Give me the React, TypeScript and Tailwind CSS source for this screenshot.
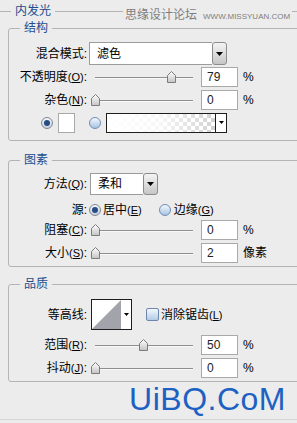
import { ReactNode } from "react"

const Label = ({ children }: { children: ReactNode }) => (
    <span className="w-[78px] shrink-0 text-right text-[12px] leading-[14px] text-black">{children}</span>
)

const Key = ({ k }: { k: string }) => (
    <span className="text-[11px]">(<u>{k}</u>)</span>
)

const Group = ({ title, className, children }: { title: string, className: string, children: ReactNode }) => (
    <div className={`relative ml-[8px] w-[300px] border border-[#b4b4b4] rounded-[3px] ${className}`}>
        <span className="absolute left-[11px] -top-[8px] px-[4px] bg-[#ececec] text-[12px] leading-[14px] text-[#234d8f]">{title}</span>
        {children}
    </div>
)

const Slider = ({ pos }: { pos: number }) => (
    <div className="relative ml-[8px] w-[98px] h-[14px] shrink-0">
        <div className="absolute left-0 right-0 top-[7px] h-px bg-[#8f8f8f]" />
        <div className="absolute left-0 right-0 top-[8px] h-px bg-[#f8f8f8]" />
        <svg className="absolute top-[1px]" style={{ left: pos }} width="9" height="12" viewBox="0 0 9 12">
            <defs>
                <linearGradient id="th" x1="0" y1="0" x2="0" y2="1">
                    <stop offset="0" stopColor="#ffffff" />
                    <stop offset="1" stopColor="#c4c4c4" />
                </linearGradient>
            </defs>
            <path d="M0.5 4.5 L4.5 0.5 L8.5 4.5 L8.5 11.5 L0.5 11.5 Z" fill="url(#th)" stroke="#7c7c7c" />
        </svg>
    </div>
)

const Field = ({ value, unit }: { value: string, unit: string }) => (
    <>
        <div className="ml-[8px] w-[37px] h-[20px] shrink-0 bg-white border border-[#a9a9a9] flex items-center pl-[5px] text-[12px] text-[#222]">{value}</div>
        <span className="ml-[5px] text-[12px] leading-[14px] text-black">{unit}</span>
    </>
)

const Radio = ({ on }: { on?: boolean }) => (
    <span className={`w-[12px] h-[12px] shrink-0 rounded-full border flex items-center justify-center ${on ? 'border-[#7b8796] bg-gradient-to-b from-[#f4f4f4] to-[#c9d1db]' : 'border-[#6f8db3] bg-gradient-to-b from-[#f3f8fd] to-[#a8c3e2]'}`}>
        {on && <span className="w-[6px] h-[6px] rounded-full bg-[#264b85]" />}
    </span>
)

const Arrow = () => (
    <svg width="7" height="4" viewBox="0 0 7 4"><path d="M0 0 H7 L3.5 4 Z" fill="#000" /></svg>
)

const Select = ({ value, w }: { value: string, w: string }) => (
    <div className={`flex h-full ${w}`}>
        <div className="flex-1 bg-white border border-[#9c9c9c] border-r-0 flex items-center pl-[7px] text-[12px] leading-[14px] text-black">{value}</div>
        <div className="w-[15px] rounded-[3px] border border-[#8c8c8c] bg-gradient-to-b from-[#f4f4f4] to-[#c6c6c6] flex items-center justify-center">
            <Arrow />
        </div>
    </div>
)

export default function App() {
    return (
        <div className="w-[297px] h-[423px] bg-[#ececec] overflow-hidden font-['Liberation_Sans','Noto_Sans_CJK_SC',sans-serif]">
            {/* header */}
            <div className="flex items-center h-[22px]">
                <div className="w-[11px] h-px bg-[#b4b4b4]" />
                <span className="px-[4px] text-[12px] leading-[14px] text-[#234d8f]">内发光</span>
                <div className="w-[68px] h-px bg-[#b4b4b4]" />
                <span className="px-[2px] flex items-baseline translate-y-[4px] text-[#7d7d7d]">
                    <span className="text-[12px] leading-[14px]">思缘设计论坛</span>
                    <span className="ml-[6px] text-[8px] leading-[10px]">WWW.MISSYUAN.COM</span>
                </span>
                <div className="flex-1 h-px bg-[#b4b4b4]" />
            </div>

            {/* 结构 */}
            <Group title="结构" className="mt-[6px] pt-[13px] pb-[6px]">
                <div className="flex items-center h-[23px]">
                    <Label>混合模式:</Label>
                    <div className="ml-[2px] h-[23px]">
                        <Select value="滤色" w="w-[138px]" />
                    </div>
                </div>
                <div className="flex items-center h-[23px]">
                    <Label>不透明度<Key k="O" />:</Label>
                    <Slider pos={72} />
                    <Field value="79" unit="%" />
                </div>
                <div className="flex items-center h-[23px]">
                    <Label>杂色<Key k="N" />:</Label>
                    <Slider pos={-4} />
                    <Field value="0" unit="%" />
                </div>
                <div className="flex items-center h-[23px] pl-[32px]">
                    <Radio on />
                    <div className="ml-[5px] w-[17px] h-[20px] bg-white border border-[#a9a9a9]" />
                    <span className="ml-[14px]"><Radio /></span>
                    <div className="ml-[5px] w-[121px] h-[20px] flex border border-[#1e1e1e]">
                        <div className="flex-1 bg-[repeating-conic-gradient(#d2d2d2_0%_25%,#ffffff_0%_50%)] bg-[length:8px_8px]">
                            <div className="w-full h-full bg-gradient-to-r from-white via-white/80 to-transparent" />
                        </div>
                        <div className="w-[11px] border-l border-[#1e1e1e] bg-white flex items-center justify-center">
                            <svg width="5" height="3" viewBox="0 0 5 3"><path d="M0 0 H5 L2.5 3 Z" fill="#000" /></svg>
                        </div>
                    </div>
                </div>
            </Group>

            {/* 图素 */}
            <Group title="图素" className="mt-[19px] pt-[12px] pb-[3px]">
                <div className="flex items-center h-[22px]">
                    <Label>方法<Key k="Q" />:</Label>
                    <div className="ml-[3px] h-[22px]">
                        <Select value="柔和" w="w-[68px]" />
                    </div>
                </div>
                <div className="flex items-center h-[20px] mt-[5px]">
                    <Label>源:</Label>
                    <span className="ml-[2px]"><Radio on /></span>
                    <span className="ml-[2px] text-[12px] leading-[14px]">居中<Key k="E" /></span>
                    <span className="ml-[17px]"><Radio /></span>
                    <span className="ml-[3px] text-[12px] leading-[14px]">边缘<Key k="G" /></span>
                </div>
                <div className="flex items-center h-[20px]">
                    <Label>阻塞<Key k="C" />:</Label>
                    <Slider pos={-4} />
                    <Field value="0" unit="%" />
                </div>
                <div className="flex items-center h-[20px] mt-[3px]">
                    <Label>大小<Key k="S" />:</Label>
                    <Slider pos={-4} />
                    <Field value="2" unit="像素" />
                </div>
            </Group>

            {/* 品质 */}
            <Group title="品质" className="mt-[17px] pt-[14px] pb-[3px]">
                <div className="flex items-center h-[31px]">
                    <Label>等高线:</Label>
                    <div className="ml-[4px] w-[41px] h-[31px] flex border border-[#1e1e1e] bg-white">
                        <svg width="29" height="29" viewBox="0 0 29 29">
                            <path d="M0 29 L29 0 L29 29 Z" fill="#a3a3ab" />
                        </svg>
                        <div className="flex-1 flex items-center justify-center">
                            <svg width="5" height="3" viewBox="0 0 5 3"><path d="M0 0 H5 L2.5 3 Z" fill="#000" /></svg>
                        </div>
                    </div>
                    <span className="ml-[14px] w-[13px] h-[13px] rounded-[2px] border border-[#6c87ab] bg-gradient-to-b from-[#f3f8fd] to-[#b3cbe6]" />
                    <span className="ml-[2px] text-[12px] leading-[14px]">消除锯齿<Key k="L" /></span>
                </div>
                <div className="flex items-center h-[20px] mt-[5px]">
                    <Label>范围<Key k="R" />:</Label>
                    <Slider pos={44} />
                    <Field value="50" unit="%" />
                </div>
                <div className="flex items-center h-[20px] mt-[3px]">
                    <Label>抖动<Key k="J" />:</Label>
                    <Slider pos={-4} />
                    <Field value="0" unit="%" />
                </div>
            </Group>

            {/* watermark */}
            <div className="mt-[1px] flex justify-end pr-[11px] text-[32px] leading-[32px] text-[#1d61c3] tracking-[0.5px]">UiBQ.CoM</div>
            <div className="mt-[4px] h-px bg-[#d6d6d6]" />
        </div>
    )
}
